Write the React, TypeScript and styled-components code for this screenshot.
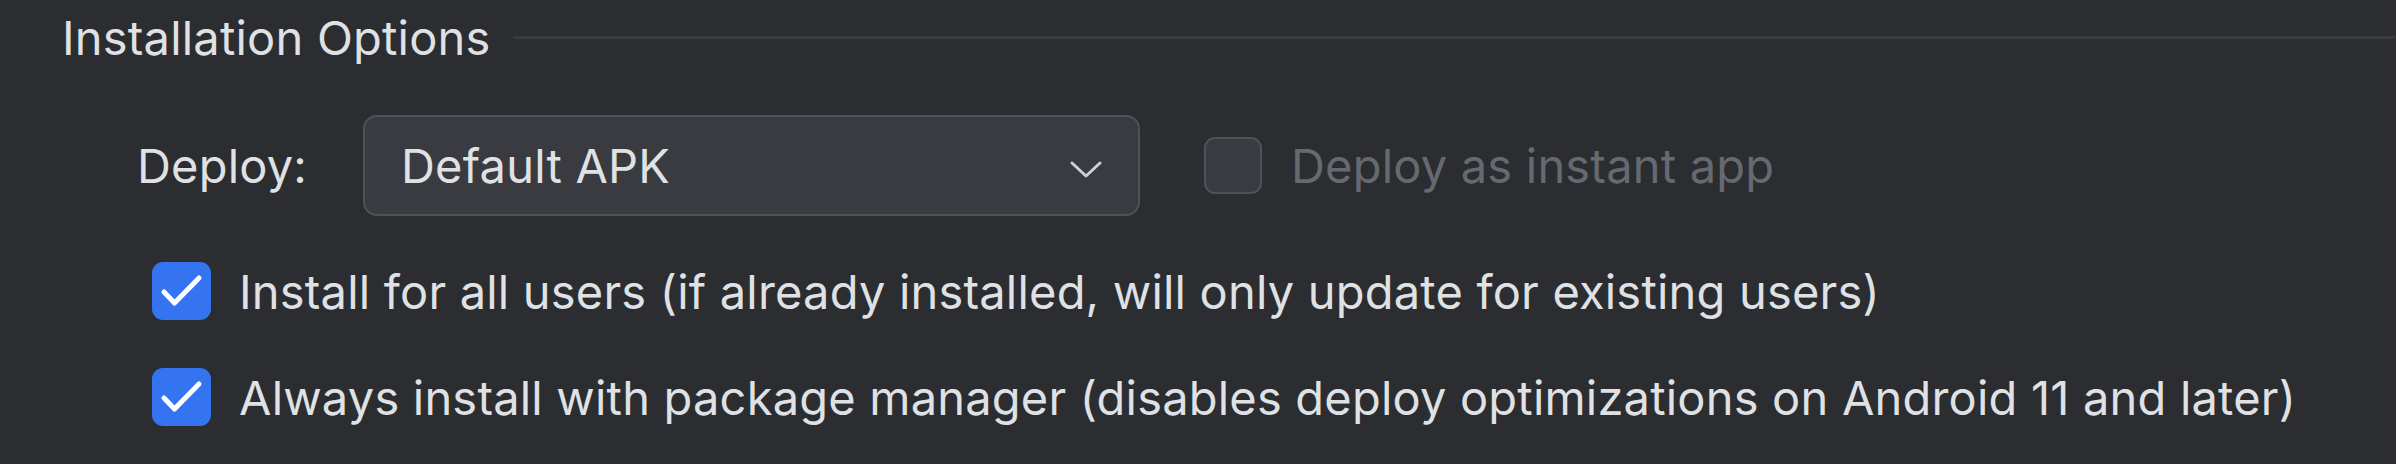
import styled, { createGlobalStyle } from 'styled-components'

const GlobalStyle = createGlobalStyle`
  html, body {
    margin: 0;
    padding: 0;
    background: #2b2d30;
  }
  body {
    font-family: 'Inter', 'Liberation Sans', sans-serif;
    color: #dfe1e5;
    -webkit-font-smoothing: antialiased;
  }
`

const Page = styled.div`
  width: 2396px;
  height: 464px;
  box-sizing: border-box;
  padding: 14px 0 0 62px;
  display: flex;
  flex-direction: column;
  overflow: hidden;
`

const TitleRow = styled.div`
  display: flex;
  align-items: center;
  gap: 22px;
  height: 47px;
`

const Title = styled.span`
  font-size: 47px;
  line-height: 1;
  letter-spacing: 0.2px;
  color: #dfe1e5;
  white-space: nowrap;
`

const Rule = styled.div`
  flex: 1;
  height: 3px;
  background: #393b40;
`

const DeployRow = styled.div`
  display: flex;
  align-items: center;
  height: 101px;
  margin-top: 54px;
  padding-left: 75px;
`

const Label = styled.span`
  flex: 0 0 226px;
  font-size: 47px;
  line-height: 1;
  letter-spacing: 0.2px;
  white-space: nowrap;
`

const Select = styled.div`
  width: 777px;
  height: 101px;
  box-sizing: border-box;
  display: flex;
  align-items: center;
  justify-content: space-between;
  padding: 0 36px 0 36px;
  background: #393b40;
  border: 2px solid #4e5157;
  border-radius: 14px;
  font-size: 47px;
  line-height: 1;
  letter-spacing: 0.2px;
  color: #dfe1e5;
`

const Chevron = styled.svg`
  width: 32px;
  height: 18px;
  margin-top: 8px;
`

const CheckRow = styled.label<{ $gap: number }>`
  display: flex;
  align-items: center;
  height: 58px;
  margin-top: ${p => p.$gap}px;
  padding-left: 90px;
  gap: 28px;
`

const InlineCheck = styled.label`
  display: flex;
  align-items: center;
  gap: 29px;
  margin-left: 64px;
`

const Box = styled.span<{ $checked?: boolean }>`
  flex: 0 0 auto;
  width: 59px;
  height: 58px;
  box-sizing: border-box;
  border-radius: 11px;
  display: flex;
  align-items: center;
  justify-content: center;
  background: ${p => (p.$checked ? '#3574f0' : '#393b40')};
  border: ${p => (p.$checked ? 'none' : '2px solid #4e5157')};
`

const CheckText = styled.span<{ $disabled?: boolean }>`
  font-size: 47px;
  line-height: 1;
  letter-spacing: 0.2px;
  white-space: nowrap;
  color: ${p => (p.$disabled ? '#666a70' : '#dfe1e5')};
`

function CheckMark() {
  return (
    <svg width="59" height="58" viewBox="0 0 59 58">
      <path
        d="M12 30 L22.5 41 L47 16"
        fill="none"
        stroke="#ffffff"
        strokeWidth="5"
        strokeLinecap="round"
        strokeLinejoin="round"
      />
    </svg>
  )
}

function Checkbox({ checked, disabled, text, gap }: { checked?: boolean; disabled?: boolean; text: string; gap: number }) {
  return (
    <CheckRow $gap={gap}>
      <Box $checked={checked}>{checked && <CheckMark />}</Box>
      <CheckText $disabled={disabled}>{text}</CheckText>
    </CheckRow>
  )
}

export default function App() {
  return (
    <>
      <GlobalStyle />
      <Page>
        <TitleRow>
          <Title>Installation Options</Title>
          <Rule />
        </TitleRow>

        <DeployRow>
          <Label>Deploy:</Label>
          <Select>
            <span>Default APK</span>
            <Chevron viewBox="0 0 32 18">
              <path d="M2 2 L16 15 L30 2" fill="none" stroke="#ced0d6" strokeWidth="3" strokeLinecap="round" strokeLinejoin="round" />
            </Chevron>
          </Select>
          <InlineCheck>
            <Box style={{ width: 58, height: 57 }} />
            <CheckText $disabled>Deploy as instant app</CheckText>
          </InlineCheck>
        </DeployRow>

        <Checkbox checked gap={46} text="Install for all users (if already installed, will only update for existing users)" />
        <Checkbox checked gap={48} text="Always install with package manager (disables deploy optimizations on Android 11 and later)" />
      </Page>
    </>
  )
}
